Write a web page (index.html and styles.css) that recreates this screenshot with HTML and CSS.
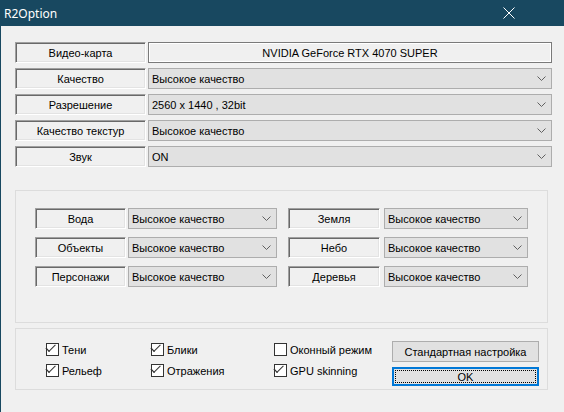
FILE: index.html
```html
<!DOCTYPE html>
<html lang="ru">
<head>
  <meta charset="UTF-8" />
  <title>R2Option</title>
  <link rel="stylesheet" href="styles.css">
</head>
<body>
  <div class="window">

    <!-- ЗАГОЛОВОК -->
    <div class="titlebar">
      <span class="title">R2Option</span>
      <svg class="close" width="12" height="12" viewBox="0 0 12 12">
        <path d="M0.5 0.5 L11.5 11.5 M11.5 0.5 L0.5 11.5" stroke="#fff" stroke-width="1" fill="none"/>
      </svg>
    </div>

    <div class="content">

      <!-- ОСНОВНЫЕ НАСТРОЙКИ -->
      <div class="main-rows">
        <div class="row">
          <div class="label">Видео-карта</div>
          <div class="field">NVIDIA GeForce RTX 4070 SUPER</div>
        </div>
        <div class="row">
          <div class="label">Качество</div>
          <div class="combo wide"><span>Высокое качество</span><svg class="arrow" width="9" height="5" viewBox="0 0 9 5"><path d="M0.5 0.5 L4.5 4.5 L8.5 0.5" stroke="#606060" fill="none"/></svg></div>
        </div>
        <div class="row">
          <div class="label">Разрешение</div>
          <div class="combo wide"><span>2560 x 1440 , 32bit</span><svg class="arrow" width="9" height="5" viewBox="0 0 9 5"><path d="M0.5 0.5 L4.5 4.5 L8.5 0.5" stroke="#606060" fill="none"/></svg></div>
        </div>
        <div class="row">
          <div class="label">Качество текстур</div>
          <div class="combo wide"><span>Высокое качество</span><svg class="arrow" width="9" height="5" viewBox="0 0 9 5"><path d="M0.5 0.5 L4.5 4.5 L8.5 0.5" stroke="#606060" fill="none"/></svg></div>
        </div>
        <div class="row">
          <div class="label">Звук</div>
          <div class="combo wide"><span>ON</span><svg class="arrow" width="9" height="5" viewBox="0 0 9 5"><path d="M0.5 0.5 L4.5 4.5 L8.5 0.5" stroke="#606060" fill="none"/></svg></div>
        </div>
      </div>

      <!-- ДЕТАЛИЗАЦИЯ -->
      <div class="group details">
        <div class="pair">
          <div class="label small-l">Вода</div>
          <div class="combo left-c"><span>Высокое качество</span><svg class="arrow" width="9" height="5" viewBox="0 0 9 5"><path d="M0.5 0.5 L4.5 4.5 L8.5 0.5" stroke="#606060" fill="none"/></svg></div>
        </div>
        <div class="pair right">
          <div class="label small-r">Земля</div>
          <div class="combo right-c"><span>Высокое качество</span><svg class="arrow" width="9" height="5" viewBox="0 0 9 5"><path d="M0.5 0.5 L4.5 4.5 L8.5 0.5" stroke="#606060" fill="none"/></svg></div>
        </div>
        <div class="pair">
          <div class="label small-l">Объекты</div>
          <div class="combo left-c"><span>Высокое качество</span><svg class="arrow" width="9" height="5" viewBox="0 0 9 5"><path d="M0.5 0.5 L4.5 4.5 L8.5 0.5" stroke="#606060" fill="none"/></svg></div>
        </div>
        <div class="pair right">
          <div class="label small-r">Небо</div>
          <div class="combo right-c"><span>Высокое качество</span><svg class="arrow" width="9" height="5" viewBox="0 0 9 5"><path d="M0.5 0.5 L4.5 4.5 L8.5 0.5" stroke="#606060" fill="none"/></svg></div>
        </div>
        <div class="pair">
          <div class="label small-l">Персонажи</div>
          <div class="combo left-c"><span>Высокое качество</span><svg class="arrow" width="9" height="5" viewBox="0 0 9 5"><path d="M0.5 0.5 L4.5 4.5 L8.5 0.5" stroke="#606060" fill="none"/></svg></div>
        </div>
        <div class="pair right">
          <div class="label small-r">Деревья</div>
          <div class="combo right-c"><span>Высокое качество</span><svg class="arrow" width="9" height="5" viewBox="0 0 9 5"><path d="M0.5 0.5 L4.5 4.5 L8.5 0.5" stroke="#606060" fill="none"/></svg></div>
        </div>
      </div>

      <!-- ОПЦИИ И КНОПКИ -->
      <div class="group options">
        <div class="checks col1">
          <label class="check"><span class="box on"></span>Тени</label>
          <label class="check"><span class="box on"></span>Рельеф</label>
        </div>
        <div class="checks col2">
          <label class="check"><span class="box on"></span>Блики</label>
          <label class="check"><span class="box on"></span>Отражения</label>
        </div>
        <div class="checks col3">
          <label class="check"><span class="box"></span>Оконный режим</label>
          <label class="check"><span class="box on"></span>GPU skinning</label>
        </div>
        <div class="buttons">
          <div class="btn">Стандартная настройка</div>
          <div class="btn default"><span>OK</span></div>
        </div>
      </div>

    </div>
  </div>
</body>
</html>
```

FILE: styles.css
```css
body {
  margin: 0;
  background: #f0f0f0;
  font-family: 'Liberation Sans', Arial, sans-serif;
  font-size: 11px;
  color: #000;
}
.window {
  width: 564px;
  height: 412px;
  box-sizing: border-box;
  border-left: 1px solid #184860;
  background: #f0f0f0;
  overflow: hidden;
}
.titlebar {
  height: 26px;
  background: #184860;
  display: flex;
  align-items: center;
  justify-content: space-between;
  margin-left: -1px;
  padding: 0 49px 0 4px;
}
.title {
  color: #fff;
  font-family: 'Noto Sans', 'Open Sans', sans-serif;
  font-size: 12px;
}
.content {
  padding: 16px 0 0 14px;
}
.main-rows {
  display: flex;
  flex-direction: column;
  gap: 5px;
}
.row {
  display: flex;
  gap: 2px;
}
.label {
  box-sizing: border-box;
  width: 131px;
  height: 21px;
  display: flex;
  align-items: center;
  justify-content: center;
  border: 1px solid;
  border-color: #a0a0a0 #fff #fff #a0a0a0;
  box-shadow: inset 1px 1px #696969, inset -1px -1px #e3e3e3;
  background: #f0f0f0;
}
.field {
  box-sizing: border-box;
  width: 404px;
  height: 21px;
  display: flex;
  align-items: center;
  justify-content: center;
  border: 1px solid #7a7a7a;
  box-shadow: inset 1px 1px #fff, inset -1px -1px #fff;
}
.combo {
  box-sizing: border-box;
  height: 21px;
  display: flex;
  align-items: center;
  justify-content: space-between;
  padding: 0 5px 0 3px;
  background: #e1e1e1;
  border: 1px solid #adadad;
}
.combo.wide {
  width: 404px;
}
.arrow {
  display: block;
}
.group {
  box-sizing: border-box;
  width: 533px;
  border: 1px solid #dcdcdc;
}
.details {
  margin-top: 23px;
  height: 133px;
  padding: 17px 0 0 19px;
  display: grid;
  grid-template-columns: 253px 240px;
  row-gap: 8px;
  align-content: start;
}
.pair {
  display: flex;
  gap: 2px;
}
.pair.right {
  gap: 4px;
}
.small-l {
  width: 91px;
}
.small-r {
  width: 92px;
}
.left-c {
  width: 149px;
}
.right-c {
  width: 144px;
}
.options {
  margin-top: 5px;
  height: 62px;
  padding: 12px 0 0 30px;
  display: flex;
  align-items: flex-start;
}
.checks {
  margin-top: 2px;
  display: flex;
  flex-direction: column;
  gap: 8px;
}
.col1 { width: 105px; }
.col2 { width: 123px; }
.col3 { width: 118px; }
.check {
  display: flex;
  align-items: center;
  gap: 3px;
  height: 13px;
  white-space: nowrap;
}
.box {
  box-sizing: border-box;
  width: 13px;
  height: 13px;
  border: 1px solid #333;
  background: #fff;
  position: relative;
}
.box.on::after {
  content: "";
  position: absolute;
  left: 2px;
  top: 1px;
  width: 7px;
  height: 4px;
  border-left: 1px solid #333;
  border-bottom: 1px solid #333;
  transform: translate(0, 2px) rotate(-45deg) scaleX(1.2);
  transform-origin: left bottom;
}
.buttons {
  width: 147px;
  display: flex;
  flex-direction: column;
  gap: 5px;
}
.btn {
  box-sizing: border-box;
  height: 21px;
  display: flex;
  align-items: center;
  justify-content: center;
  background: #e1e1e1;
  border: 1px solid #adadad;
}
.btn.default {
  height: 19px;
  border: 2px solid #0078d7;
  padding: 1px;
}
.btn.default span {
  box-sizing: border-box;
  width: 100%;
  height: 100%;
  display: flex;
  align-items: center;
  justify-content: center;
  border: 1px dotted #000;
}
```
